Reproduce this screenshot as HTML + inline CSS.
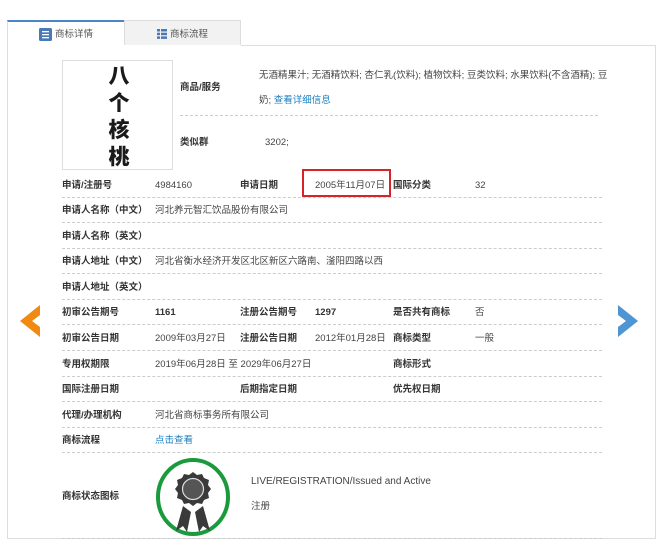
<!DOCTYPE html>
<html><head><meta charset="utf-8"><style>
*{margin:0;padding:0;box-sizing:border-box}
body{width:664px;height:549px;background:#fff;font-family:"Liberation Sans","Noto Sans CJK SC",sans-serif;font-size:9.5px;color:#444;position:relative;overflow:hidden}
.a{position:absolute;white-space:nowrap;line-height:12px}
.b{font-weight:bold;color:#333}
.sep{position:absolute;left:62px;width:540px;border-top:1px dashed #ccc}
.lnk{color:#1a7fc1}
</style></head><body>
<div class="a" style="left:7px;top:20px;width:117px;height:26px;border-top:2px solid #4a86c5;border-left:1px solid #ddd;background:#fff"></div>
<div class="a" style="left:124px;top:20px;width:117px;height:25px;background:#f2f2f2;border:1px solid #ddd;border-bottom:none"></div>
<div class="a" style="left:7px;top:45px;width:649px;height:494px;border:1px solid #ddd;border-top:none"></div>
<div class="a" style="left:241px;top:45px;width:415px;border-top:1px solid #ddd"></div>
<svg class="a" style="left:39px;top:28px" width="13" height="13"><rect width="13" height="13" rx="1.5" fill="#4a7ab5"/><rect x="3" y="3" width="7" height="1.3" fill="#fff"/><rect x="3" y="6" width="7" height="1.3" fill="#fff"/><rect x="3" y="9" width="7" height="1.3" fill="#fff"/></svg>
<div class="a" style="left:55px;top:29px;color:#555">商标详情</div>
<svg class="a" style="left:157px;top:29px" width="10" height="10"><rect width="3" height="2.5" fill="#4a7ab5"/><rect x="4" width="6" height="2.5" fill="#4a7ab5"/><rect y="3.7" width="3" height="2.5" fill="#4a7ab5"/><rect x="4" y="3.7" width="6" height="2.5" fill="#4a7ab5"/><rect y="7.4" width="3" height="2.5" fill="#4a7ab5"/><rect x="4" y="7.4" width="6" height="2.5" fill="#4a7ab5"/></svg>
<div class="a" style="left:170px;top:29px;color:#555">商标流程</div>
<div class="a" style="left:62px;top:60px;width:111px;height:110px;border:1px solid #ddd"></div>
<div class="a" style="left:105px;top:62px;font-size:21px;line-height:27px;font-weight:900;color:#1a1a1a;width:28px;white-space:normal;text-align:center;font-family:'Noto Sans CJK SC',sans-serif">八个核桃</div>
<div class="a b" style="left:180px;top:82px">商品/服务</div>
<div class="a" style="left:259px;top:70px">无酒精果汁; 无酒精饮料; 杏仁乳(饮料); 植物饮料; 豆类饮料; 水果饮料(不含酒精); 豆</div>
<div class="a" style="left:259px;top:95px">奶; <span class="lnk">查看详细信息</span></div>
<div class="sep" style="left:180px;width:418px;top:115px"></div>
<div class="a b" style="left:180px;top:137px">类似群</div>
<div class="a" style="left:265px;top:137px">3202;</div>
<div class="a b" style="left:62px;top:180px">申请/注册号</div><div class="a" style="left:155px;top:180px">4984160</div>
<div class="a b" style="left:240px;top:180px">申请日期</div><div class="a" style="left:315px;top:180px">2005年11月07日</div>
<div class="a b" style="left:393px;top:180px">国际分类</div><div class="a" style="left:475px;top:180px">32</div>
<div class="a" style="left:302px;top:169px;width:89px;height:28px;border:2.5px solid #d8232a"></div>
<div class="sep" style="top:197px"></div>
<div class="a b" style="left:62px;top:205px">申请人名称（中文）</div><div class="a" style="left:155px;top:205px">河北养元智汇饮品股份有限公司</div>
<div class="sep" style="top:222px"></div>
<div class="a b" style="left:62px;top:231px">申请人名称（英文）</div>
<div class="sep" style="top:248px"></div>
<div class="a b" style="left:62px;top:256px">申请人地址（中文）</div><div class="a" style="left:155px;top:256px">河北省衡水经济开发区北区新区六路南、滏阳四路以西</div>
<div class="sep" style="top:273px"></div>
<div class="a b" style="left:62px;top:282px">申请人地址（英文）</div>
<div class="sep" style="top:299px"></div>
<div class="a b" style="left:62px;top:307px">初审公告期号</div><div class="a b" style="left:155px;top:307px">1161</div>
<div class="a b" style="left:240px;top:307px">注册公告期号</div><div class="a b" style="left:315px;top:307px">1297</div>
<div class="a b" style="left:393px;top:307px">是否共有商标</div><div class="a" style="left:475px;top:307px">否</div>
<div class="sep" style="top:324px"></div>
<div class="a b" style="left:62px;top:333px">初审公告日期</div><div class="a" style="left:155px;top:333px">2009年03月27日</div>
<div class="a b" style="left:240px;top:333px">注册公告日期</div><div class="a" style="left:315px;top:333px">2012年01月28日</div>
<div class="a b" style="left:393px;top:333px">商标类型</div><div class="a" style="left:475px;top:333px">一般</div>
<div class="sep" style="top:350px"></div>
<div class="a b" style="left:62px;top:359px">专用权期限</div><div class="a" style="left:155px;top:359px">2019年06月28日 至 2029年06月27日</div>
<div class="a b" style="left:393px;top:359px">商标形式</div>
<div class="sep" style="top:376px"></div>
<div class="a b" style="left:62px;top:384px">国际注册日期</div><div class="a b" style="left:240px;top:384px">后期指定日期</div><div class="a b" style="left:393px;top:384px">优先权日期</div>
<div class="sep" style="top:401px"></div>
<div class="a b" style="left:62px;top:410px">代理/办理机构</div><div class="a" style="left:155px;top:410px">河北省商标事务所有限公司</div>
<div class="sep" style="top:427px"></div>
<div class="a b" style="left:62px;top:435px">商标流程</div><div class="a lnk" style="left:155px;top:435px">点击查看</div>
<div class="sep" style="top:452px"></div>
<div class="a b" style="left:62px;top:491px">商标状态图标</div>
<svg class="a" style="left:153px;top:456px" width="80" height="82"><ellipse cx="40" cy="41" rx="35" ry="37" fill="none" stroke="#1a9a3c" stroke-width="4"/><path d="M30 50 L23 75 L30 70 L34 76 L38 56 Z M50 50 L57 75 L50 70 L46 76 L42 56 Z" fill="#3a3a3a"/><path d="M40 16 L44 19 L49 18 L51 22 L56 24 L55 29 L58 33 L55 37 L56 42 L51 44 L49 48 L44 47 L40 50 L36 47 L31 48 L29 44 L24 42 L25 37 L22 33 L25 29 L24 24 L29 22 L31 18 L36 19 Z" fill="#3a3a3a"/><circle cx="40" cy="33" r="10.5" fill="#555" stroke="#ddd" stroke-width="1.2"/></svg>
<div class="a" style="left:251px;top:476px;font-size:10px">LIVE/REGISTRATION/Issued and Active</div>
<div class="a" style="left:251px;top:501px">注册</div>
<div class="sep" style="top:538px"></div>
<svg class="a" style="left:18px;top:305px" width="24" height="32"><path d="M22 0 L2 16 L22 32 L22 22 L14 16 L22 10 Z" fill="#f08a12"/></svg>
<svg class="a" style="left:616px;top:305px" width="24" height="32"><path d="M2 0 L22 16 L2 32 L2 22 L10 16 L2 10 Z" fill="#4f95d3"/></svg>
</body></html>
